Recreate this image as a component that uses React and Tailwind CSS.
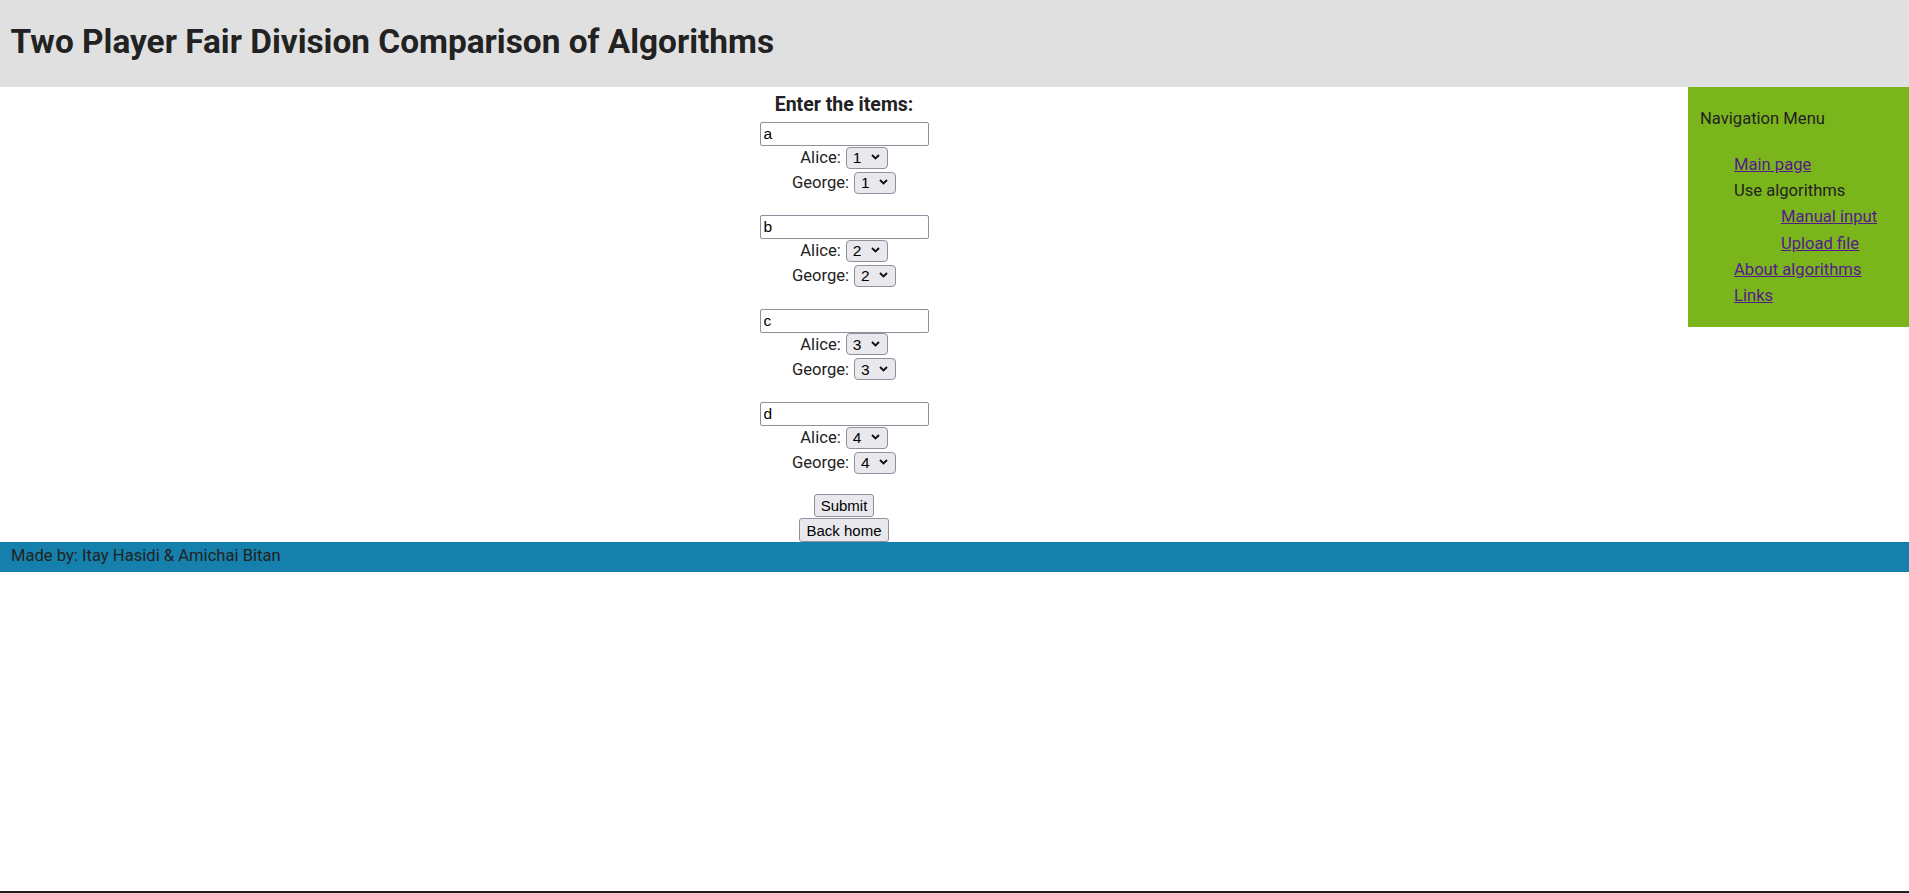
import React from 'react';

const items = [
  { name: 'a', score: 1 },
  { name: 'b', score: 2 },
  { name: 'c', score: 3 },
  { name: 'd', score: 4 },
];

const ScoreSelect = ({ value }) => (
  <span className="relative inline-block">
    <select
      defaultValue={value}
      className="appearance-none h-[22px] w-[42px] border border-[#8f8f9d] rounded-[4px] bg-[#e9e9ed] pl-[6px] text-[15.5px] leading-none text-black font-['Liberation_Sans',Arial,sans-serif]"
    >
      {[1, 2, 3, 4].map((n) => (
        <option key={n} value={n}>{n}</option>
      ))}
    </select>
    <svg
      className="absolute right-[8px] top-[8px] w-[9px] h-[6px] pointer-events-none"
      viewBox="0 0 9 6"
      fill="none"
    >
      <path d="M1 1l3.5 3.5L8 1" stroke="#111" strokeWidth="1.9" />
    </svg>
  </span>
);

const ItemBlock = ({ item }) => (
  <div className="flex flex-col items-center">
    <input
      type="text"
      defaultValue={item.name}
      className="w-[169px] h-[24px] border border-[#8f8f9d] rounded-[2px] px-[3px] text-[15.5px] text-black bg-white font-['Liberation_Sans',Arial,sans-serif]"
    />
    <div className="h-[25px] flex items-center gap-[5px]">
      <span>Alice:</span>
      <ScoreSelect value={item.score} />
    </div>
    <div className="h-[25px] flex items-center gap-[5px]">
      <span>George:</span>
      <ScoreSelect value={item.score} />
    </div>
  </div>
);

const NavMenu = () => (
  <nav className="w-[221px] h-[240px] shrink-0 bg-[#7bb51c] pt-[23px] pl-[12px]">
    <p className="leading-[18.75px]">Navigation Menu</p>
    <ul className="mt-[23px] pl-[34px] leading-[26.3px]">
      <li><a href="#" className="text-[#551a8b] underline">Main page</a></li>
      <li>Use algorithms</li>
      <li>
        <ul className="pl-[47px]">
          <li><a href="#" className="text-[#551a8b] underline">Manual input</a></li>
          <li><a href="#" className="text-[#551a8b] underline">Upload file</a></li>
        </ul>
      </li>
      <li><a href="#" className="text-[#551a8b] underline">About algorithms</a></li>
      <li><a href="#" className="text-[#551a8b] underline">Links</a></li>
    </ul>
  </nav>
);

export default function App() {
  return (
    <div className="h-[893px] border-b-2 border-[#202020] bg-white text-[16.6px] text-[#222] font-['Roboto',sans-serif]">
      <header className="h-[87px] bg-[#e0e0e0] pl-[10.5px] pt-[23px]">
        <h1 className="text-[33.4px] font-bold leading-[37.5px]">Two Player Fair Division Comparison of Algorithms</h1>
      </header>

      <div className="flex">
        <main className="flex-1 flex flex-col items-center">
          <h3 className="mt-[6.6px] text-[19.5px] font-bold leading-[22px]">Enter the items:</h3>
          <form className="mt-[6.4px] flex flex-col items-center">
            <div className="flex flex-col gap-[19.3px]">
              {items.map((item) => (
                <ItemBlock key={item.name} item={item} />
              ))}
            </div>
            <button
              type="button"
              className="mt-[18px] h-[23.5px] px-[6px] border border-[#8f8f9d] rounded-[3px] bg-[#e9e9ed] text-[15px] text-black leading-none font-['Liberation_Sans',Arial,sans-serif]"
            >
              Submit
            </button>
            <button
              type="button"
              className="mt-[1px] h-[23.5px] px-[6px] border border-[#8f8f9d] rounded-[3px] bg-[#e9e9ed] text-[15px] text-black leading-none font-['Liberation_Sans',Arial,sans-serif]"
            >
              Back home
            </button>
          </form>
        </main>
        <NavMenu />
      </div>

      <footer className="h-[30px] bg-[#1580ab] pl-[11px] flex items-center">
        Made by: Itay Hasidi &amp; Amichai Bitan
      </footer>
    </div>
  );
}
